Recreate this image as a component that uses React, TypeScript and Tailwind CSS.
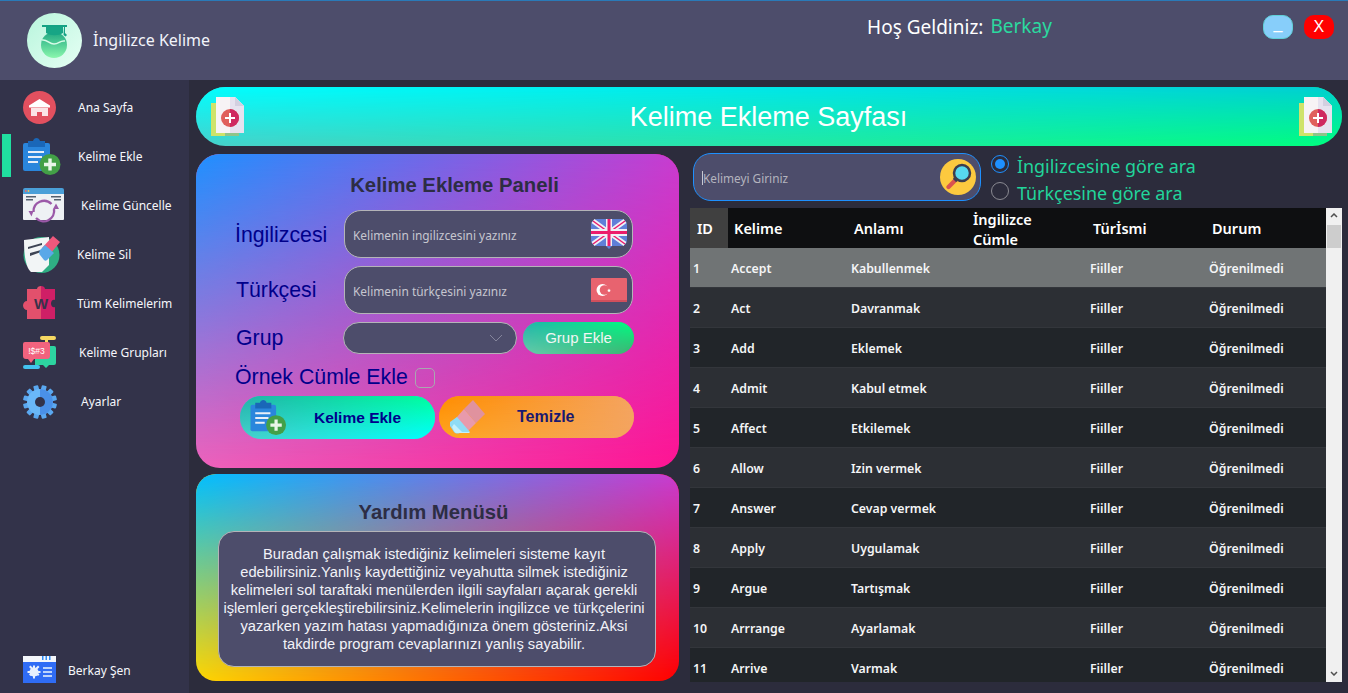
import { ReactNode } from "react"

const ui = "font-['Noto_Sans','Open_Sans',sans-serif]"
const arial = "font-['Liberation_Sans',Arial,sans-serif]"
const fade = "[mask-image:linear-gradient(to_bottom,#000,transparent)]"

// four corner gradient: bottom colours on the box, top colours faded over them
function Quad({ bottom, top, className, children }: { bottom: string; top: string; className: string; children: ReactNode }) {
  return (
    <div className={`relative overflow-hidden ${bottom} ${className}`}>
      <div className={`absolute inset-0 ${top} ${fade}`} />
      <div className="relative h-full w-full">{children}</div>
    </div>
  )
}

function Logo() {
  return (
    <svg viewBox="0 0 55 55" className="h-[55px] w-[55px]">
      <defs>
        <linearGradient id="lg1" x1="0" y1="0" x2="1" y2="1">
          <stop offset="0" stopColor="#b8f5dc" />
          <stop offset="1" stopColor="#e6fff4" />
        </linearGradient>
        <linearGradient id="lg2" x1="0" y1="0" x2="0" y2="1">
          <stop offset="0" stopColor="#1fa882" />
          <stop offset="1" stopColor="#8af7ad" />
        </linearGradient>
      </defs>
      <circle cx="27.500" cy="27.500" r="27.500" fill="url(#lg1)" />
      <circle cx="27" cy="32" r="13" fill="url(#lg2)" />
      <path d="M15 27c5-1 7 4 12 4s6-4 11-3" fill="none" stroke="#d8fbe8" strokeWidth="1.500" />
      <path d="M15 12h25v2H15z" fill="#14a284" />
      <path d="M19 14h17v6c-5 3-12 3-17 0z" fill="#17a585" />
      <path d="M37 14h1v6l2 2-1.500 1.500-2-1.500z" fill="#14a284" />
    </svg>
  )
}

function HomeIcon() {
  return (
    <svg viewBox="0 0 33 33" className="h-[33px] w-[33px]">
      <circle cx="16.500" cy="16.500" r="16.500" fill="#e2505f" />
      <path d="M16.500 8 6 14.500v2h21v-2z" fill="#fff" />
      <path d="M8 17h17v8h-6v-4h-5v4H8z" fill="#fbe4e6" />
    </svg>
  )
}

function ClipboardIcon({ className }: { className: string }) {
  return (
    <svg viewBox="0 0 38 38" className={className}>
      <rect x="0" y="5" width="27" height="28" rx="2" fill="#2a86dc" />
      <path d="M5 3h5c1-4 6-4 7 0h5v6H5z" fill="#1a67b8" />
      <path d="M5 13h16v2H5zM5 18h14v2H5zM5 23h10v2H5z" fill="#e8eef8" />
      <circle cx="27" cy="26.500" r="10.500" fill="#43a047" />
      <path d="M25.300 20.500h3.400v4.300H33v3.400h-4.300v4.300h-3.400v-4.300H21v-3.400h4.300z" fill="#e8f5e9" />
    </svg>
  )
}

function UpdateIcon() {
  return (
    <svg viewBox="0 0 41 38" className="h-[38px] w-[41px]">
      <path d="M0 3a2 2 0 0 1 2-2h37a2 2 0 0 1 2 2v4H0z" fill="#4a9fd8" />
      <path d="M0 7h41v25a1 1 0 0 1-1 1H1a1 1 0 0 1-1-1z" fill="#eef1f4" />
      <path d="M3 9h10v1.500H3zM3 12h7v1.500H3zM28 9h10v1.500H28zM31 12h7v1.500h-7z" fill="#54606e" />
      <circle cx="2.800" cy="4" r=".9" fill="#f06a6a" />
      <circle cx="5.500" cy="4" r=".9" fill="#f5c44f" />
      <path d="M10.500 25a10.500 10.500 0 0 1 18-8" fill="none" stroke="#9b59a8" strokeWidth="2.400" />
      <path d="M31 22a10.500 10.500 0 0 1-18 9" fill="none" stroke="#9b59a8" strokeWidth="2.400" />
      <path d="m5.500 24 5 0 -2 5.500zM30 22h6l-3-5.500z" fill="#9b59a8" />
    </svg>
  )
}

function NoteEraserIcon() {
  return (
    <svg viewBox="0 0 37 37" className="h-[37px] w-[37px]">
      <circle cx="18.500" cy="19" r="18" fill="#2fae84" />
      <path d="M1 4 26 1v28l-7 7H8C3 32 1 20 1 4z" fill="#f2f5f6" />
      <path d="M5 11l14-4v2L5 13zM7 17l11-3v2L7 20z" fill="#3e4454" />
      <path d="M19 12 30 0l7 6-9 11z" fill="#f0587c" />
      <path d="M17 14l5-5 9 8-7 7c-1 1-2 1-3 0l-4-5c-1-1-1-3 0-5z" fill="#5aa8e8" />
    </svg>
  )
}

function PuzzleIcon() {
  return (
    <svg viewBox="0 0 36 37" className="h-[37px] w-[36px]">
      <path d="M4 4h10c0-2 2-3 4-3v33H4v-9c-2 0-4-2-4-4.500S2 16 4 16z" fill="#e2506c" />
      <path d="M18 1c2 0 4 1 4 3h10v11c-2-1-4 1-4 3.500s2 4.500 4 3.500v12H18z" fill="#cf1f66" />
      <text x="18" y="24" textAnchor="middle" fontSize="15" fontWeight="700" fill="#38324a" fontFamily="Liberation Sans">W</text>
    </svg>
  )
}

function ChatIcon() {
  return (
    <svg viewBox="0 0 33 34" className="h-[34px] w-[33px]">
      <rect x="17" y="0" width="16" height="4" rx="2" fill="#f6d862" />
      <path d="M22 4h3v2h-3z" fill="#f6d862" />
      <path d="M12 10h19a2 2 0 0 1 2 2v15a2 2 0 0 1-2 2h-5l-3 3-3-3h-8z" fill="#2dd4a0" />
      <path d="M2 6h23a2 2 0 0 1 2 2v12a3 3 0 0 1-3 3H11l-3 4-3-4H3a3 3 0 0 1-3-3V8a2 2 0 0 1 2-2z" fill="#f2637e" />
      <text x="13.500" y="18" textAnchor="middle" fontSize="8.500" fill="#fff" fontFamily="Liberation Sans">!$#3</text>
      <rect x="0" y="29" width="17" height="4" rx="2" fill="#43c3ef" />
    </svg>
  )
}

function GearIcon() {
  const teeth = [0, 30, 60, 90, 120, 150]
  return (
    <svg viewBox="0 0 34 34" className="h-[34px] w-[34px]">
      {teeth.map((a) => (
        <rect key={a} x="14.500" y="0" width="5" height="34" rx="1" fill="#5aa8f0" transform={`rotate(${a + 15} 17 17)`} />
      ))}
      <circle cx="17" cy="17" r="13" fill="#6ab8f8" />
      <path d="M17 4a13 13 0 0 1 0 26z" fill="#4a90e8" />
      <circle cx="17" cy="17" r="5" fill="#33334a" />
    </svg>
  )
}

function WindowGearIcon() {
  return (
    <svg viewBox="0 0 33 27" className="h-[27px] w-[33px]">
      <rect width="33" height="27" fill="#2f6cf5" />
      <rect width="33" height="6" fill="#f4f7fb" />
      <path d="M19 0h1.500v4H19zM22.500 0H24v4h-1.500zM26 0h1.500v4H26z" fill="#2f8cf5" />
      <circle cx="11" cy="16" r="4.500" fill="#e8f0fd" />
      <path d="M10 9.500h2v13h-2zM4.500 15h13v2h-13zM6 11l1.500-1.500 9 9L15 20zM15 9.500 16.500 11l-9 9L6 18.500z" fill="#e8f0fd" />
      <path d="M20 11h9v2h-9zM20 15h9v2h-9zM20 19h9v2h-9z" fill="#bcd3fb" />
    </svg>
  )
}

function DocPlusIcon() {
  return (
    <svg viewBox="0 0 33 39" className="h-[39px] w-[33px]">
      <rect x="0" y="6" width="28" height="33" fill="#cfe36a" />
      <rect x="14" y="33" width="14" height="6" fill="#8fc48a" />
      <path d="M5 0h19l9 9v27H5z" fill="#f7f3f5" />
      <path d="M19 0h5l9 9v27H19z" fill="#e6e2ef" />
      <path d="M24 0l9 9h-9z" fill="#d3cfe0" />
      <circle cx="19" cy="21" r="9" fill="#e0605c" />
      <path d="M19 12a9 9 0 0 1 0 18z" fill="#cf2860" />
      <path d="M18 16h2v4h4v2h-4v4h-2v-4h-4v-2h4z" fill="#fff" />
    </svg>
  )
}

function UkFlag() {
  return (
    <svg viewBox="0 0 36 31" className="h-[31px] w-[36px]">
      <path d="M6 0h24a6 6 0 0 1 6 6v15a6 6 0 0 1-6 6H21l-3 3-3-3H6a6 6 0 0 1-6-6V6a6 6 0 0 1 6-6z" fill="#5f7fd8" />
      <path d="M2 2 34 25M34 2 2 25" stroke="#eef0f6" strokeWidth="5" />
      <path d="M2 2 34 25M34 2 2 25" stroke="#ec1c6b" strokeWidth="1.500" />
      <path d="M0 10h36v7H0zM15 0h6v27h-6z" fill="#eef0f6" />
      <path d="M0 12h36v3H0zM16.500 0h3v27h-3z" fill="#ec1c6b" />
    </svg>
  )
}

function TrFlag() {
  return (
    <svg viewBox="0 0 36 24" className="h-[24px] w-[36px]">
      <rect width="36" height="24" rx="1" fill="#e8636f" />
      <path d="M0 22h36v2H0z" fill="#d14f5c" />
      <circle cx="11.500" cy="12" r="6" fill="#fff" />
      <circle cx="13.500" cy="12" r="4.800" fill="#e8636f" />
      <path d="m18 10.500.6 1.200 1.300.2-1 .9.300 1.300-1.200-.7-1.200.7.300-1.300-1-.9 1.300-.2z" fill="#fff" />
    </svg>
  )
}

function EraserIcon() {
  return (
    <svg viewBox="0 0 35 34" className="h-[34px] w-[35px]">
      <path d="M23 0l12 14-9 9-12-14z" fill="#e0929e" />
      <path d="M14 9 26 23l-9 9H7L0 25z" fill="#e89aac" />
      <path d="M7 17l13 15h-9c-2 2-5 2-7 0l-4-6c-1-2-1-3 0-4z" fill="#8fdcf5" />
      <path d="M4 24l8 8h7l1 1H8c-2 0-3 0-4-2l-2-4z" fill="#c4f0fc" />
    </svg>
  )
}

function SearchIcon() {
  return (
    <svg viewBox="0 0 36 36" className="h-[36px] w-[36px]">
      <circle cx="18" cy="18" r="18" fill="#fcc93f" />
      <path d="M7 26.500l7-7 3 3-7 7c-1 1-2 1-3 0s-1-2 0-3z" fill="#d9534f" />
      <path d="M14 18l4 4-2 1-3-3z" fill="#3d3d4d" />
      <circle cx="22" cy="14" r="8" fill="#57d9ee" stroke="#3d3d4d" strokeWidth="2.500" />
    </svg>
  )
}

const nav = [
  { label: "Ana Sayfa", icon: <HomeIcon />, text: "ml-[22px]" },
  { label: "Kelime Ekle", icon: <ClipboardIcon className="h-[38px] w-[38px]" />, text: "ml-[17px]" },
  { label: "Kelime Güncelle", icon: <UpdateIcon />, text: "ml-[17px]" },
  { label: "Kelime Sil", icon: <NoteEraserIcon />, text: "ml-[17px]" },
  { label: "Tüm Kelimelerim", icon: <PuzzleIcon />, text: "ml-[18px]" },
  { label: "Kelime Grupları", icon: <ChatIcon />, text: "ml-[23px]" },
  { label: "Ayarlar", icon: <GearIcon />, text: "ml-[24px]" },
]

const words = [
  ["Accept", "Kabullenmek"],
  ["Act", "Davranmak"],
  ["Add", "Eklemek"],
  ["Admit", "Kabul etmek"],
  ["Affect", "Etkilemek"],
  ["Allow", "Izin vermek"],
  ["Answer", "Cevap vermek"],
  ["Apply", "Uygulamak"],
  ["Argue", "Tartışmak"],
  ["Arrrange", "Ayarlamak"],
  ["Arrive", "Varmak"],
]

const cols = "grid grid-cols-[38px_120px_120px_120px_119px_1fr]"
const label = `${arial} text-[21.300px] leading-[24px] text-[#00008b]`
const field = "flex items-center rounded-[17px] border border-[#b4b4b8] bg-[#4d4d6b]"

export default function App() {
  return (
    <div className={`flex h-[693px] w-[1348px] flex-col overflow-hidden bg-[#2c2c3c] ${ui}`}>
      {/* Header */}
      <header className="flex h-[80px] shrink-0 items-start border-t border-[#2a7ab8] bg-[#4d4d6b] text-white">
        <div className="ml-[27px] mt-[12px]">
          <Logo />
        </div>
        <span className="ml-[11px] mt-[28px] text-[16px] leading-[22px] text-[#f2f4fa]">İngilizce Kelime</span>
        <span className="ml-[657px] mt-[14px] text-[19px] leading-[24px]">Hoş Geldiniz:</span>
        <span className="ml-[7px] mt-[13px] text-[19px] leading-[24px] text-[#2bd99f]">Berkay</span>
        <button className={`${arial} ml-[211px] mt-[14px] flex h-[24px] w-[30px] items-start justify-center rounded-[10px] border border-[#5fd0d8] bg-[#87cefa] text-[16px] leading-[16px] text-white`}>
          _
        </button>
        <button className={`${arial} ml-[11px] mt-[14px] flex h-[24px] w-[30px] items-center justify-center rounded-[10px] bg-[#ff0000] text-[16px] text-white`}>
          X
        </button>
      </header>

      <div className="flex min-h-0 flex-1">
        {/* Sidebar */}
        <aside className="flex w-[189px] shrink-0 flex-col bg-[#33334a] pt-[3px] text-[12px] text-[#f6f7fb]">
          {nav.map((item, i) => (
            <div key={item.label} className="relative flex h-[49px] items-center pl-[23px]">
              {i === 1 && <div className="absolute left-[2px] top-[2px] h-[43px] w-[9px] bg-[#20dfa0]" />}
              {item.icon}
              <span className={item.text}>{item.label}</span>
            </div>
          ))}
          <div className="mt-auto flex items-center pb-[10px] pl-[23px]">
            <WindowGearIcon />
            <span className="ml-[12px] pt-[2px]">Berkay Şen</span>
          </div>
        </aside>

        {/* Content */}
        <main className="flex min-w-0 flex-1 flex-col pl-[7px] pr-[6px] pt-[7px]">
          <Quad
            bottom="bg-[linear-gradient(to_right,#48d1cc,#00ff7f)]"
            top="bg-[linear-gradient(to_right,#00ffff,#00ced1)]"
            className="h-[59px] shrink-0 rounded-[30px]"
          >
            <div className="flex h-full items-center justify-between pl-[15px] pr-[10px]">
              <DocPlusIcon />
              <h1 className={`${arial} mr-[6px] mt-[2px] text-[27px] text-white`}>Kelime Ekleme Sayfası</h1>
              <DocPlusIcon />
            </div>
          </Quad>

          <div className="mt-[8px] flex min-h-0 flex-1 gap-[11px]">
            {/* Left column */}
            <div className="flex w-[483px] shrink-0 flex-col gap-[6px]">
              <Quad
                bottom="bg-[linear-gradient(to_right,#ee62bc,#ff1493)]"
                top="bg-[linear-gradient(to_right,#1e90ff,#c83cd0)]"
                className="h-[314px] rounded-[24px]"
              >
                <div className="flex flex-col">
                  <h2 className={`${arial} mt-[19px] pl-[34px] text-center text-[20.300px] font-bold leading-[24px] text-[#2d2d44]`}>Kelime Ekleme Paneli</h2>
                  <div className="mt-[13px] flex items-center pl-[39px]">
                    <span className={`${label} mt-[2px] w-[109px]`}>İngilizcesi</span>
                    <div className={`${field} h-[48px] w-[289px] justify-between pl-[8px] pr-[5px]`}>
                      <span className="mt-[4px] text-[11.900px] text-[#c6c6cf]">Kelimenin ingilizcesini yazınız</span>
                      <UkFlag />
                    </div>
                  </div>
                  <div className="mt-[8px] flex items-center pl-[40px]">
                    <span className={`${label} w-[108px]`}>Türkçesi</span>
                    <div className={`${field} h-[48px] w-[289px] justify-between pl-[8px] pr-[5px]`}>
                      <span className="mt-[4px] text-[11.900px] text-[#c6c6cf]">Kelimenin türkçesini yazınız</span>
                      <TrFlag />
                    </div>
                  </div>
                  <div className="mt-[8px] flex items-center pl-[40px]">
                    <span className={`${label} w-[107px]`}>Grup</span>
                    <div className={`${field} h-[32px] w-[174px] justify-end rounded-[16px] pr-[13px]`}>
                      <svg viewBox="0 0 14 8" className="h-[8px] w-[14px]">
                        <path d="M1 1l6 6 6-6" fill="none" stroke="#85859c" strokeWidth="1" />
                      </svg>
                    </div>
                    <Quad
                      bottom="bg-[linear-gradient(to_right,#66cdaa,#3cb371)]"
                      top="bg-[linear-gradient(to_right,#20b2aa,#00ff7f)]"
                      className="ml-[6px] h-[32px] w-[111px] rounded-[16px]"
                    >
                      <div className={`${arial} flex h-full items-center justify-center text-[15px] text-[#f2f6f4]`}>Grup Ekle</div>
                    </Quad>
                  </div>
                  <div className="mt-[12px] flex h-[24px] items-center pl-[39px]">
                    <span className={`${label} -mt-[2px]`}>Örnek Cümle Ekle</span>
                    <div className="ml-[7px] h-[20px] w-[20px] rounded-[5px] border border-[#a8a8b0]" />
                  </div>
                  <div className="mt-[6px] flex items-start gap-[4px] pl-[44px]">
                    <Quad
                      bottom="bg-[linear-gradient(to_right,#48d1cc,#00ffff)]"
                      top="bg-[linear-gradient(to_right,#20b2aa,#00ff9a)]"
                      className="h-[43px] w-[195px] rounded-[21px]"
                    >
                      <div className={`${arial} flex h-full items-center pl-[10px] text-[15.500px] font-bold text-[#00008b]`}>
                        <ClipboardIcon className="h-[36px] w-[37px]" />
                        <span className="ml-[27px]">Kelime Ekle</span>
                      </div>
                    </Quad>
                    <Quad
                      bottom="bg-[linear-gradient(to_right,#ffa620,#f4a460)]"
                      top="bg-[linear-gradient(to_right,#ff8c00,#f4a460)]"
                      className="h-[42px] w-[195px] rounded-[21px]"
                    >
                      <div className={`${arial} flex h-full items-center pl-[11px] text-[16px] font-bold text-[#191970]`}>
                        <EraserIcon />
                        <span className="ml-[32px]">Temizle</span>
                      </div>
                    </Quad>
                  </div>
                </div>
              </Quad>

              <Quad
                bottom="bg-[linear-gradient(to_right,#ffd700,#ff0000)]"
                top="bg-[linear-gradient(to_right,#00bfff,#c83cd0)]"
                className="h-[207px] rounded-[20px]"
              >
                <h2 className={`${arial} mt-[26px] pr-[8px] text-center text-[20.300px] font-bold leading-[24px] text-[#2d2d44]`}>Yardım Menüsü</h2>
                <div className={`${arial} ml-[22px] mr-[23px] mt-[7px] flex h-[136px] items-center justify-center rounded-[16px] border border-[#b4b4b8] bg-[#4d4d6b] pr-[6px] text-center text-[14.700px] leading-[18px] text-[#f2f2f8]`}>
                  <p>
                    Buradan çalışmak istediğiniz kelimeleri sisteme kayıt
                    <br />
                    edebilirsiniz.Yanlış kaydettiğiniz veyahutta silmek istediğiniz
                    <br />
                    kelimeleri sol taraftaki menülerden ilgili sayfaları açarak gerekli
                    <br />
                    işlemleri gerçekleştirebilirsiniz.Kelimelerin ingilizce ve türkçelerini
                    <br />
                    yazarken yazım hatası yapmadığınıza önem gösteriniz.Aksi
                    <br />
                    takdirde program cevaplarınızı yanlış sayabilir.
                  </p>
                </div>
              </Quad>
            </div>

            {/* Right column */}
            <div className="-mt-[1px] flex min-w-0 flex-1 flex-col">
              <div className="flex h-[55px] shrink-0 items-start pl-[3px]">
                <div className="flex h-[48px] w-[288px] items-center justify-between rounded-[18px] border border-[#1e90ff] bg-[#4d4d6b] pl-[8px] pr-[4px]">
                  <span className="mt-[2px] border-l border-[#c8c8d0] text-[11.800px] leading-[14px] text-[#b4b4be]">Kelimeyi Giriniz</span>
                  <SearchIcon />
                </div>
                <div className="ml-[10px] flex flex-col gap-[1px] text-[17.900px] leading-[26px] text-[#22d59b]">
                  <label className="flex items-center gap-[8px]">
                    <span className="mb-[4px] flex h-[18px] w-[18px] items-center justify-center rounded-full border border-[#1e90ff]">
                      <span className="h-[10px] w-[10px] rounded-full bg-[#1e90ff]" />
                    </span>
                    İngilizcesine göre ara
                  </label>
                  <label className="flex items-center gap-[8px]">
                    <span className="mb-[4px] h-[18px] w-[18px] rounded-full border border-[#8a8a92]" />
                    Türkçesine göre ara
                  </label>
                </div>
              </div>

              <div className="flex h-[474px] shrink-0 overflow-hidden">
                <div className="min-w-0 flex-1 text-[12.300px] font-semibold text-[#f4f5f6]">
                  <div className={`${cols} h-[40px] bg-[#0e0f11] text-[14.500px] leading-[21px] text-white`}>
                    <div className="flex items-center bg-[#404040] pl-[7px]">ID</div>
                    <div className="flex items-center pl-[6px]">Kelime</div>
                    <div className="flex items-center pl-[6px]">Anlamı</div>
                    <div className="h-[40px] pl-[5px] pt-[1px] leading-[20px]">
                      İngilizce
                      <br />
                      Cümle
                    </div>
                    <div className="flex items-center pl-[5px]">Türİsmi</div>
                    <div className="flex items-center pl-[5px]">Durum</div>
                  </div>
                  {words.map(([word, meaning], i) => (
                    <div
                      key={word}
                      className={`${cols} h-[40px] items-center border-b border-[#33363b] pt-[3px] ${
                        i === 0 ? "bg-[#707475]" : i % 2 === 1 ? "bg-[#2c2f34]" : "bg-[#212529]"
                      }`}
                    >
                      <div className="pl-[3px]">{i + 1}</div>
                      <div className="pl-[3px]">{word}</div>
                      <div className="pl-[3px]">{meaning}</div>
                      <div />
                      <div className="pl-[2px]">Fiiller</div>
                      <div className="pl-[2px]">Öğrenilmedi</div>
                    </div>
                  ))}
                </div>
                <div className="flex w-[16px] shrink-0 flex-col items-center justify-between bg-[#f0f0f0] py-[5px]">
                  <div className="flex w-full flex-col items-center">
                    <svg viewBox="0 0 8 5" className="h-[5px] w-[8px]">
                      <path d="M1 4l3-3 3 3" fill="none" stroke="#505050" strokeWidth="1.500" />
                    </svg>
                    <div className="ml-[-1px] mt-[7px] h-[23px] w-[14px] bg-[#cdcdcd]" />
                  </div>
                  <svg viewBox="0 0 8 5" className="mb-[1px] h-[5px] w-[8px]">
                    <path d="M1 1l3 3 3-3" fill="none" stroke="#505050" strokeWidth="1.500" />
                  </svg>
                </div>
              </div>
            </div>
          </div>
        </main>
      </div>
    </div>
  )
}
